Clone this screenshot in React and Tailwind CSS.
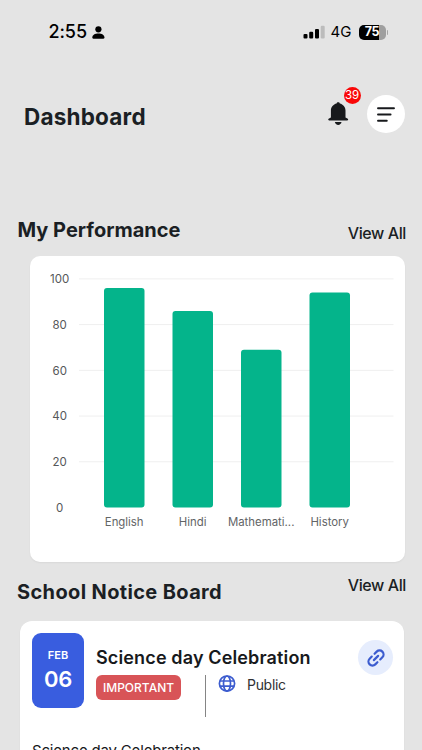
import React from 'react';

const ticks = [100, 80, 60, 40, 20, 0];

const subjects = [
  { id: 'english', label: 'English', score: 96 },
  { id: 'hindi', label: 'Hindi', score: 86 },
  { id: 'maths', label: 'Mathemati...', score: 69 },
  { id: 'history', label: 'History', score: 94 },
];

const StatusBar = () => (
  <div className="flex h-16 shrink-0 items-center pl-[48.5px] pr-[34px] text-black">
    <span className="text-[18px] font-medium leading-6 tracking-[-0.1px]">2:55</span>
    <svg className="ml-[5px] h-[13px] w-[13px]" viewBox="0 0 13 13" fill="currentColor">
      <circle cx="6.4" cy="3.3" r="3.1" />
      <path d="M0.3 11.6C0.3 9 3 7.5 6.4 7.5s6.1 1.5 6.1 4.1c0 .7-.4 1.1-1.1 1.1H1.4c-.7 0-1.1-.4-1.1-1.1z" />
    </svg>
    <div className="ml-auto flex items-center">
      <svg className="h-[14px] w-[22px]" viewBox="0 0 22 14">
        <rect x="0.5" y="9" width="4" height="4.5" rx="1.1" />
        <rect x="6.2" y="6.8" width="4" height="6.7" rx="1.1" />
        <rect x="12" y="4" width="4" height="9.5" rx="1.1" />
        <rect x="17.7" y="0.8" width="4" height="12.7" rx="1.1" fill="#bcbcbc" />
      </svg>
      <span className="ml-[6px] text-[15px] leading-5">4G</span>
      <div className="ml-[7px] flex h-[15px] w-[27px] items-center justify-center rounded-[5px] bg-linear-to-r from-black from-75% to-[#9f9f9f] to-75%">
        <span className="text-[12.5px] font-bold leading-none tracking-[-0.4px] text-white">75</span>
      </div>
      <div className="ml-px h-[5px] w-[1.5px] rounded-r bg-[#a6a6a6]"></div>
    </div>
  </div>
);

const Header = () => (
  <header className="flex h-[100px] shrink-0 items-center pl-[24px] pr-[17px]">
    <h1 className="mt-[6px] text-[22.5px] font-bold leading-7 tracking-[0.2px]">Dashboard</h1>
    <div className="ml-auto flex items-center">
      <div className="relative mr-[18px] h-[24px] w-[21px]">
        <svg className="h-full w-full" viewBox="0 0 21 24" fill="#17191c">
          <path d="M10.2 0.2c.9 0 1.5.5 1.6 1.3 3.3.7 5.7 3.6 5.7 7v7l2.3 1.2c.7.6.5 1.7-.5 1.7H1.1c-1 0-1.2-1.1-.5-1.7l2.3-1.2v-7c0-3.4 2.4-6.3 5.7-7 .1-.8.7-1.3 1.6-1.3z" />
          <path d="M6.9 20h6.6c-.3 1.6-1.6 2.9-3.3 2.9S7.2 21.6 6.9 20z" />
        </svg>
        <span className="absolute left-[15.5px] top-[-15px] flex h-[17px] w-[17px] items-center justify-center rounded-full bg-[#f90808] text-[11.5px] leading-none text-white">
          39
        </span>
      </div>
      <button className="flex h-[38px] w-[38px] items-center justify-center rounded-full bg-white">
        <svg className="h-[16px] w-[18px]" viewBox="0 0 18 16" fill="none" stroke="#17191c" strokeWidth="1.9" strokeLinecap="round">
          <path d="M1 2.3h16M1 8.5h12.6M1 14.7h8.8" />
        </svg>
      </button>
    </div>
  </header>
);

const PerformanceChart = () => {
  const yFor = (value) => 251.5 - value * 2.286;

  return (
    <svg className="block h-[306px] w-[375px]" viewBox="0 0 375 306" fontFamily="Inter, sans-serif">
      {ticks.map((tick) => (
        <g key={tick}>
          {tick > 0 && <line x1="49" x2="363.5" y1={yFor(tick)} y2={yFor(tick)} stroke="#efefef" />}
          <text x="29.7" y={yFor(tick) + 4.2} textAnchor="middle" fontSize="11.5" fill="#555759">
            {tick}
          </text>
        </g>
      ))}
      {subjects.map((subject, i) => {
        const x = 74 + i * 68.5;
        return (
          <g key={subject.id}>
            <rect x={x} y={yFor(subject.score)} width="40.5" height={subject.score * 2.286} rx="3" fill="#04b48b" />
            <text x={x + 20.2} y="270.3" textAnchor="middle" fontSize="11.4" fill="#626466">
              {subject.label}
            </text>
          </g>
        );
      })}
    </svg>
  );
};

const NoticeCard = () => (
  <div className="ml-[20px] mr-[18px] h-[160px] rounded-[12px] bg-white pl-[12px] pr-[11px] pt-[12px] shadow-xs">
    <div className="flex">
      <div className="flex h-[75px] w-[52px] shrink-0 flex-col items-center rounded-[9px] bg-[#395ddf] text-white">
        <span className="mt-[14px] text-[11px] font-semibold leading-4">FEB</span>
        <span className="mt-[2px] text-[22px] font-semibold leading-7 tracking-[-0.2px]">06</span>
      </div>
      <div className="ml-[12px] flex-1">
        <h3 className="mt-[13px] whitespace-nowrap text-[18px] font-semibold leading-6 tracking-[0.14px] text-[#17191c]">
          Science day Celebration
        </h3>
        <div className="mt-[5px] flex items-start">
          <span className="flex h-[25px] w-[85px] items-center justify-center rounded-[6px] bg-[#d85457] pt-px text-[12px] font-medium text-white">
            IMPORTANT
          </span>
          <div className="ml-[24px] h-[42px] w-px bg-[#858585]"></div>
          <svg className="ml-[12px] h-[18px] w-[18px]" viewBox="0 0 18 18" fill="none" stroke="#3c5ccf" strokeWidth="1.7">
            <circle cx="9" cy="8.600" r="7.600" />
            <ellipse cx="9" cy="8.600" rx="3.500" ry="7.600" />
            <path d="M2 6h14M2 11.200h14" />
          </svg>
          <span className="ml-[11px] text-[14px] leading-5 tracking-[-0.3px] text-[#303234]">Public</span>
        </div>
      </div>
      <button className="mt-[7px] flex h-[35px] w-[35px] shrink-0 items-center justify-center rounded-full bg-[#e6edfd]">
        <svg className="h-[24px] w-[24px] -rotate-45" viewBox="0 0 24 24" fill="none" stroke="#3c5ccf" strokeWidth="2.2" strokeLinecap="round">
          <path d="M10 8H7a4 4 0 0 0 0 8h3M14 8h3a4 4 0 0 1 0 8h-3M9 12h6" />
        </svg>
      </button>
    </div>
    <p className="mt-[22px] text-[15px] leading-6 tracking-[-0.18px] text-[#17191c]">Science day Celebration</p>
  </div>
);

const App = () => {
  return (
    <div className="flex h-[750px] w-full flex-col overflow-hidden bg-[#e4e4e4] font-['Inter',sans-serif] text-[#1b1f24]">
      <StatusBar />
      <Header />

      <section className="mt-[52px] shrink-0">
        <div className="flex h-[40px] items-start justify-between pl-[17.5px] pr-[16px]">
          <h2 className="text-[20px] font-bold leading-7">My Performance</h2>
          <span className="mt-[5px] text-[16px] font-medium leading-6 tracking-[-0.4px]">View All</span>
        </div>
        <div className="ml-[30px] h-[306px] w-[375px] rounded-[10px] bg-white shadow-xs">
          <PerformanceChart />
        </div>
      </section>

      <section className="mt-[11px] shrink-0">
        <div className="flex h-[48px] items-start justify-between pl-[17px] pr-[16px]">
          <h2 className="mt-[5px] text-[20px] font-bold leading-7 tracking-[0.36px]">School Notice Board</h2>
          <span className="text-[16px] font-medium leading-6 tracking-[-0.4px]">View All</span>
        </div>
        <NoticeCard />
      </section>
    </div>
  );
};

export default App;
